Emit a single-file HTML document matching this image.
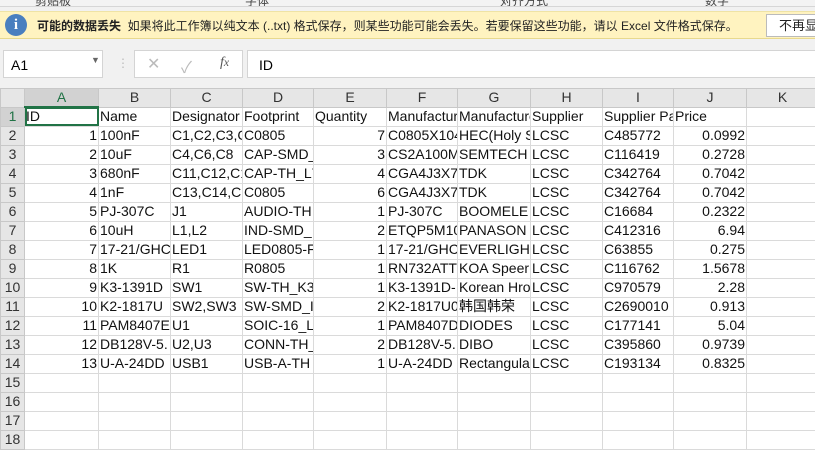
<!DOCTYPE html>
<html><head><meta charset="utf-8"><style>
*{margin:0;padding:0;box-sizing:border-box}
body{width:815px;height:447px;overflow:hidden;background:#f1f1f1;font-family:"Liberation Sans","Noto Sans CJK SC",sans-serif;position:relative}
.abs{position:absolute}
.rib{top:0;left:0;width:815px;height:7px;background:#f3f3f3;border-bottom:1px solid #d6d6d6;overflow:hidden;font-size:12px;color:#444}
.rib span{position:absolute;top:-8px}
.info{top:11px;left:0;width:815px;height:28px;background:#fff3c0;border-top:1px solid #efe3a5;border-bottom:1px solid #e8d98d;font-size:12px;color:#222}
.ic{left:5px;top:2px;width:22px;height:22px;border-radius:50%;background:#4a7fbf;color:#fff;font-weight:bold;font-size:15px;text-align:center;line-height:22px;font-family:"Liberation Serif",serif}
.btn{left:766px;top:2px;width:60px;height:23px;background:#fff;border:1px solid #bbb;font-size:13px;padding-left:12px;line-height:21px;white-space:nowrap;overflow:hidden}
.box{background:#fff;border:1px solid #d4d4d4}
table{position:absolute;left:0;top:88px;width:818px;border-collapse:collapse;table-layout:fixed;font-size:14px;color:#111}
td{height:19px;border:1px solid #dadada;background:#fff;white-space:nowrap;overflow:hidden;padding:0 1px;line-height:17px;text-overflow:clip}
td.h{background:#e6e6e6;color:#333;text-align:center;border-color:#c8c8c8;font-size:14px}
td.r{text-align:right}
tr.hd td{height:18px;background:#e6e6e6;text-align:center;color:#333;border-color:#c8c8c8}
</style></head><body>
<div class="abs rib"><span style="left:35px">剪贴板</span><span style="left:245px">字体</span><span style="left:500px">对齐方式</span><span style="left:705px">数字</span></div>
<div class="abs info"><div class="abs ic">i</div><div class="abs" style="left:37px;top:5px;white-space:nowrap"><b>可能的数据丢失</b>&nbsp;&nbsp;如果将此工作簿以纯文本 (..txt) 格式保存，则某些功能可能会丢失。若要保留这些功能，请以 Excel 文件格式保存。</div><div class="abs btn">不再显示</div></div>
<div class="abs box" style="left:3px;top:50px;width:100px;height:28px;font-size:14px;padding:6px 0 0 7px">A1<span class="abs" style="left:87px;top:4px;font-size:9px;color:#666">▼</span></div>
<div class="abs" style="left:117px;top:56px;color:#bbb;font-size:12px">⋮</div>
<div class="abs box" style="left:134px;top:50px;width:109px;height:28px;color:#bbb;font-size:16px"><span class="abs" style="left:12px;top:3px">✕</span><span class="abs" style="left:46px;top:3px">✓</span><span class="abs" style="left:85px;top:4px;color:#555;font-family:'Liberation Serif',serif;font-style:italic;font-size:14px">f<small>x</small></span></div>
<div class="abs box" style="left:247px;top:50px;width:580px;height:28px;font-size:14px;padding:6px 0 0 11px">ID</div>
<table>
<colgroup><col style="width:24px"><col style="width:74px"><col style="width:72px"><col style="width:72px"><col style="width:71px"><col style="width:73px"><col style="width:71px"><col style="width:73px"><col style="width:72px"><col style="width:71px"><col style="width:73px"><col style="width:72px"></colgroup>
<tr class="hd"><td style="background:#e6e6e6"></td><td style="background:#d2d2d2;color:#217346;border-bottom:2px solid #217346">A</td><td>B</td><td>C</td><td>D</td><td>E</td><td>F</td><td>G</td><td>H</td><td>I</td><td>J</td><td>K</td></tr>
<tr><td class="h" style="background:#d2d2d2;color:#217346">1</td><td style="outline:2px solid #217346;outline-offset:-2px">ID</td><td>Name</td><td>Designator</td><td>Footprint</td><td>Quantity</td><td>Manufacturer</td><td>Manufacturer</td><td>Supplier</td><td>Supplier Part</td><td>Price</td><td></td></tr>
<tr><td class="h">2</td><td class="r">1</td><td>100nF</td><td>C1,C2,C3,C</td><td>C0805</td><td class="r">7</td><td>C0805X104</td><td>HEC(Holy S</td><td>LCSC</td><td>C485772</td><td class="r">0.0992</td><td></td></tr>
<tr><td class="h">3</td><td class="r">2</td><td>10uF</td><td>C4,C6,C8</td><td>CAP-SMD_</td><td class="r">3</td><td>CS2A100M</td><td>SEMTECH</td><td>LCSC</td><td>C116419</td><td class="r">0.2728</td><td></td></tr>
<tr><td class="h">4</td><td class="r">3</td><td>680nF</td><td>C11,C12,C1</td><td>CAP-TH_L7</td><td class="r">4</td><td>CGA4J3X7I</td><td>TDK</td><td>LCSC</td><td>C342764</td><td class="r">0.7042</td><td></td></tr>
<tr><td class="h">5</td><td class="r">4</td><td>1nF</td><td>C13,C14,C1</td><td>C0805</td><td class="r">6</td><td>CGA4J3X7I</td><td>TDK</td><td>LCSC</td><td>C342764</td><td class="r">0.7042</td><td></td></tr>
<tr><td class="h">6</td><td class="r">5</td><td>PJ-307C</td><td>J1</td><td>AUDIO-TH</td><td class="r">1</td><td>PJ-307C</td><td>BOOMELE</td><td>LCSC</td><td>C16684</td><td class="r">0.2322</td><td></td></tr>
<tr><td class="h">7</td><td class="r">6</td><td>10uH</td><td>L1,L2</td><td>IND-SMD_</td><td class="r">2</td><td>ETQP5M10</td><td>PANASON</td><td>LCSC</td><td>C412316</td><td class="r">6.94</td><td></td></tr>
<tr><td class="h">8</td><td class="r">7</td><td>17-21/GHC</td><td>LED1</td><td>LED0805-F</td><td class="r">1</td><td>17-21/GHC</td><td>EVERLIGHT</td><td>LCSC</td><td>C63855</td><td class="r">0.275</td><td></td></tr>
<tr><td class="h">9</td><td class="r">8</td><td>1K</td><td>R1</td><td>R0805</td><td class="r">1</td><td>RN732ATT</td><td>KOA Speer</td><td>LCSC</td><td>C116762</td><td class="r">1.5678</td><td></td></tr>
<tr><td class="h">10</td><td class="r">9</td><td>K3-1391D</td><td>SW1</td><td>SW-TH_K3</td><td class="r">1</td><td>K3-1391D-</td><td>Korean Hro</td><td>LCSC</td><td>C970579</td><td class="r">2.28</td><td></td></tr>
<tr><td class="h">11</td><td class="r">10</td><td>K2-1817U</td><td>SW2,SW3</td><td>SW-SMD_I</td><td class="r">2</td><td>K2-1817U0</td><td>韩国韩荣</td><td>LCSC</td><td>C2690010</td><td class="r">0.913</td><td></td></tr>
<tr><td class="h">12</td><td class="r">11</td><td>PAM8407E</td><td>U1</td><td>SOIC-16_L</td><td class="r">1</td><td>PAM8407D</td><td>DIODES</td><td>LCSC</td><td>C177141</td><td class="r">5.04</td><td></td></tr>
<tr><td class="h">13</td><td class="r">12</td><td>DB128V-5.</td><td>U2,U3</td><td>CONN-TH_</td><td class="r">2</td><td>DB128V-5.</td><td>DIBO</td><td>LCSC</td><td>C395860</td><td class="r">0.9739</td><td></td></tr>
<tr><td class="h">14</td><td class="r">13</td><td>U-A-24DD</td><td>USB1</td><td>USB-A-TH</td><td class="r">1</td><td>U-A-24DD</td><td>Rectangula</td><td>LCSC</td><td>C193134</td><td class="r">0.8325</td><td></td></tr>
<tr><td class="h">15</td><td></td><td></td><td></td><td></td><td></td><td></td><td></td><td></td><td></td><td></td><td></td></tr>
<tr><td class="h">16</td><td></td><td></td><td></td><td></td><td></td><td></td><td></td><td></td><td></td><td></td><td></td></tr>
<tr><td class="h">17</td><td></td><td></td><td></td><td></td><td></td><td></td><td></td><td></td><td></td><td></td><td></td></tr>
<tr><td class="h">18</td><td></td><td></td><td></td><td></td><td></td><td></td><td></td><td></td><td></td><td></td><td></td></tr>
</table>
</body></html>
